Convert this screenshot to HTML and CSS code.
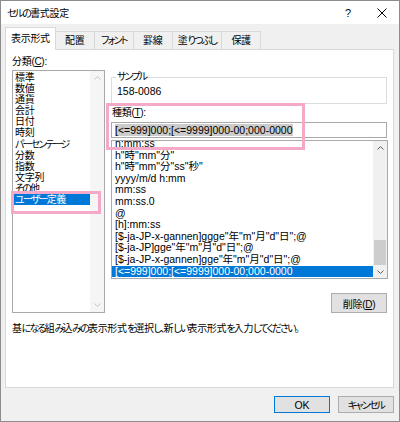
FILE: index.html
```html
<!DOCTYPE html>
<html lang="ja">
<head>
<meta charset="utf-8">
<title>セルの書式設定</title>
<link rel="stylesheet" href="styles.css">
</head>
<body>
<div class="window">
  <div class="titlebar">
    <span class="title"><span class="kn">セルの</span>書式設定</span>
    <span class="tb-btn help">?</span>
    <span class="tb-btn close"><svg width="10" height="10" viewBox="0 0 10 10"><path d="M0.5 0.5 L9.5 9.5 M9.5 0.5 L0.5 9.5" stroke="#000" stroke-width="1" fill="none"/></svg></span>
  </div>
  <div class="tabs">
    <div class="tab active">表示形式</div>
    <div class="tab">配置</div>
    <div class="tab"><span class="kn">フォント</span></div>
    <div class="tab">罫線</div>
    <div class="tab">塗<span class="kn">りつぶし</span></div>
    <div class="tab">保護</div>
  </div>
  <div class="panel">
    <div class="main">
      <div class="left">
        <div class="label">分類(<u>C</u>):</div>
        <div class="listbox cat">
          <ul class="items">
            <li>標準</li>
            <li>数値</li>
            <li>通貨</li>
            <li>会計</li>
            <li>日付</li>
            <li>時刻</li>
            <li><span class="kn">パーセンテージ</span></li>
            <li>分数</li>
            <li>指数</li>
            <li>文字列</li>
            <li><span class="kn">その</span>他</li>
            <li class="sel"><span class="kn">ユーザー</span>定義</li>
          </ul>
          <div class="vscroll disabled">
            <div class="arr"><svg width="7" height="4" viewBox="0 0 7 4"><polyline points="0.5,3.5 3.5,0.5 6.5,3.5" fill="none" stroke="currentColor" stroke-width="1"/></svg></div>
            <div class="track"></div>
            <div class="arr"><svg width="7" height="4" viewBox="0 0 7 4"><polyline points="0.5,0.5 3.5,3.5 6.5,0.5" fill="none" stroke="currentColor" stroke-width="1"/></svg></div>
          </div>
        </div>
      </div>
      <div class="right">
        <fieldset class="sample">
          <legend><span class="kn">サンプル</span></legend>
          <div class="sample-val">158-0086</div>
        </fieldset>
        <div class="label type-label">種類(<u>T</u>):</div>
        <div class="input"><span class="hl">[&lt;=999]000;[&lt;=9999]000-00;000-0000</span></div>
        <div class="listbox fmt">
          <ul class="items">
            <li>h:mm:ss</li>
            <li>h"時"mm"分"</li>
            <li>h"時"mm"分"ss"秒"</li>
            <li>yyyy/m/d h:mm</li>
            <li>mm:ss</li>
            <li>mm:ss.0</li>
            <li>@</li>
            <li>[h]:mm:ss</li>
            <li>[$-ja-JP-x-gannen]ggge"年"m"月"d"日";@</li>
            <li>[$-ja-JP]gge"年"m"月"d"日";@</li>
            <li>[$-ja-JP-x-gannen]gge"年"m"月"d"日";@</li>
            <li class="sel">[&lt;=999]000;[&lt;=9999]000-00;000-0000</li>
          </ul>
          <div class="vscroll">
            <div class="arr up"><svg width="7" height="4" viewBox="0 0 7 4"><polyline points="0.5,3.5 3.5,0.5 6.5,3.5" fill="none" stroke="currentColor" stroke-width="1"/></svg></div>
            <div class="track"><div class="thumb"></div></div>
            <div class="arr down"><svg width="7" height="4" viewBox="0 0 7 4"><polyline points="0.5,0.5 3.5,3.5 6.5,0.5" fill="none" stroke="currentColor" stroke-width="1"/></svg></div>
          </div>
        </div>
        <div class="btn-row"><button class="btn del">削除(<u>D</u>)</button></div>
      </div>
    </div>
    <p class="desc">基<span class="kn">になる</span>組<span class="kn">み</span>込<span class="kn">みの</span>表示形式<span class="kn">を</span>選択<span class="kn">し、</span>新<span class="kn">しい</span>表示形式<span class="kn">を</span>入力<span class="kn">してください。</span></p>
    <div class="mark mark-cat"></div>
    <div class="mark mark-type"></div>
  </div>
  <div class="footer">
    <button class="btn ok">OK</button>
    <button class="btn"><span class="kn">キャンセル</span></button>
  </div>
</div>
</body>
</html>
```
FILE: styles.css
```css
* { box-sizing: border-box; }
body {
  margin: 0;
  font-family: "Liberation Sans", "Noto Sans CJK JP", sans-serif;
  font-size: 10px;
  color: #000;
  letter-spacing: -0.3px;
  font-feature-settings: "palt";
}
.kn { letter-spacing: -1.8px; }
.window {
  width: 400px;
  height: 422px;
  border: 1px solid #8c8c8c;
  background: #f0f0f0;
  display: flex;
  flex-direction: column;
}
.titlebar {
  height: 23px;
  flex: none;
  background: #fff;
  display: flex;
  align-items: center;
}
.title { flex: 1; padding-left: 6px; }
.tb-btn {
  width: 34px;
  height: 23px;
  display: flex;
  align-items: center;
  justify-content: center;
}
.help { font-size: 11px; }
.tabs {
  height: 25px;
  flex: none;
  display: flex;
  align-items: flex-end;
  padding-left: 4px;
}
.tab {
  height: 18px;
  min-width: 40px;
  padding: 0 5px;
  margin-left: -1px;
  border: 1px solid #d9d9d9;
  border-bottom: none;
  background: #f0f0f0;
  display: flex;
  align-items: center;
  justify-content: center;
  line-height: 12px;
}
.tab.active {
  height: 23px;
  margin-left: 0;
  margin-bottom: -1px;
  background: #fff;
  position: relative;
  z-index: 1;
}
.panel {
  flex: none;
  height: 339px;
  margin: 0 5px 0 4px;
  background: #fff;
  border: 1px solid #d9d9d9;
  padding: 6px 0 0 6px;
  position: relative;
}
.main { display: flex; gap: 6px; align-items: flex-start; }
.left { width: 93px; flex: none; }
.label { line-height: 12px; height: 12px; white-space: nowrap; }
.left .label { margin-bottom: 2px; }
.listbox {
  border: 1px solid #a9a9a9;
  background: #fff;
  display: flex;
  overflow: hidden;
}
.cat { height: 243px; }
.items {
  list-style: none;
  margin: 0;
  padding: 0;
  flex: 1;
  min-width: 0;
  overflow: hidden;
}
.cat .items { padding-top: 1px; }
.items li {
  height: 11.1px;
  line-height: 11.1px;
  padding-left: 2px;
  white-space: nowrap;
}
.items li.sel { background: #0078d7; color: #fff; }
.fmt .items { margin-top: -3px; font-size: 10.5px; letter-spacing: 0; }
.fmt .items li { height: 11.6px; line-height: 11.6px; padding-left: 3px; }
.vscroll {
  width: 14px;
  flex: none;
  display: flex;
  flex-direction: column;
  background: #f0f0f0;
  color: #606060;
}
.vscroll.disabled { background: #f5f5f5; color: #c4c4c4; }
.arr {
  height: 14px;
  flex: none;
  display: flex;
  align-items: center;
  justify-content: center;
}
.arr svg { display: block; }
.arr.down { height: 13px; }
.track {
  flex: 1;
  display: flex;
  flex-direction: column;
  justify-content: flex-end;
}
.thumb { height: 25px; margin: 0 1px; background: #cdcdcd; }
.right { width: 277px; flex: none; }
.sample {
  margin: 15px 1px 0 0;
  border: 1px solid #dcdcdc;
  padding: 2px 0 6px 4px;
  min-width: 0;
}
.sample legend { padding: 0 1px; line-height: 12px; }
.sample-val { line-height: 12px; margin-left: 1px; font-size: 10.5px; letter-spacing: 0; }
.type-label { margin-top: 3px; margin-left: 1px; }
.input {
  height: 16px;
  margin-top: 3px;
  margin-right: 1px;
  border: 1px solid #a9a9a9;
  background: #fff;
  padding-left: 3px;
  display: flex;
  align-items: center;
  white-space: nowrap;
  overflow: hidden;
  font-size: 10.5px;
  letter-spacing: 0;
}
.input .hl { background: #cccccc; line-height: 12px; }
.fmt { height: 139px; margin-top: 2px; }
.btn-row {
  display: flex;
  justify-content: flex-end;
  margin-top: 14px;
  margin-right: 1px;
}
.btn {
  font: inherit;
  letter-spacing: inherit;
  color: #000;
  width: 56px;
  height: 17px;
  padding: 0;
  background: #e1e1e1;
  border: 1px solid #adadad;
}
.btn.del { height: 20px; }
.btn.ok { border-color: #0078d7; font-size: 10.5px; letter-spacing: 0; }
.desc { margin: 10px 0 0; line-height: 12px; white-space: nowrap; }
.mark {
  position: absolute;
  border: 3px solid #f4a9c9;
  pointer-events: none;
}
.mark-cat { left: 5px; top: 141px; width: 90px; height: 23px; }
.mark-type { left: 100px; top: 53px; width: 199px; height: 47px; }
.footer {
  display: flex;
  justify-content: flex-end;
  gap: 8px;
  padding: 8px 5px 0 0;
}
```
